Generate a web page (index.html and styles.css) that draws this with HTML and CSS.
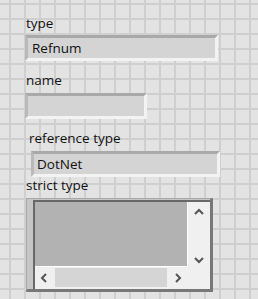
FILE: index.html
```html
<!DOCTYPE html>
<html lang="en">
<head>
    <meta charset="UTF-8">
    <meta name="viewport" content="width=device-width, initial-scale=1.0">
    <title>Refnum</title>
    <link rel="stylesheet" href="styles.css">
</head>
<body>
    <div class="panel">
        <div class="label lbl-type">type</div>
        <div class="field f-refnum">Refnum</div>

        <div class="label lbl-name">name</div>
        <div class="field f-name"></div>

        <div class="label lbl-ref">reference type</div>
        <div class="field f-dotnet">DotNet</div>

        <div class="label lbl-strict">strict type</div>
        <div class="listbox">
            <div class="inner">
                <div class="content"></div>
                <div class="vbar">
                    <svg width="10" height="7" viewBox="0 0 10 7"><path d="M1 6 L5 2 L9 6" fill="none" stroke="#555" stroke-width="2"/></svg>
                    <svg width="10" height="7" viewBox="0 0 10 7"><path d="M1 1 L5 5 L9 1" fill="none" stroke="#555" stroke-width="2"/></svg>
                </div>
                <div class="hbar">
                    <svg width="7" height="10" viewBox="0 0 7 10"><path d="M6 1 L2 5 L6 9" fill="none" stroke="#555" stroke-width="2"/></svg>
                    <div class="thumb"></div>
                    <svg width="7" height="10" viewBox="0 0 7 10"><path d="M1 1 L5 5 L1 9" fill="none" stroke="#555" stroke-width="2"/></svg>
                </div>
                <div class="corner"></div>
            </div>
        </div>
    </div>
</body>
</html>
```

FILE: styles.css
```css
*{
    margin: 0;
    padding: 0;
    box-sizing: border-box;
}
body{
    width: 258px;
    height: 299px;
    overflow: hidden;
    background-color: #e3e3e3;
    background-image:
        linear-gradient(to right, #cfcfcf 2px, transparent 2px),
        linear-gradient(to bottom, #cfcfcf 2px, transparent 2px);
    background-size: 15px 15px;
    background-position: 9px 3px;
    font: 13.5px "Open Sans", "Liberation Sans", sans-serif;
    color: #111;
}
.panel{
    display: flex;
    flex-direction: column;
    align-items: flex-start;
    padding-top: 15px;
}
.label{
    line-height: 16px;
    height: 16px;
}
.field{
    height: 26px;
    line-height: 16px;
    padding: 2px 4px;
    background: #d4d4d4;
    border-top: 3px solid #a9a9a9;
    border-left: 3px solid #b9b9b9;
    border-right: 3px solid #f3f3f3;
    border-bottom: 3px solid #f3f3f3;
}
.lbl-type{ margin-left: 26px; }
.f-refnum{ margin: 4px 0 0 25px; width: 193px; }
.lbl-name{ margin: 11px 0 0 26px; }
.f-name{ margin: 5px 0 0 25px; width: 122px; }
.lbl-ref{ margin: 11px 0 0 29px; }
.f-dotnet{ margin: 5px 0 0 31px; width: 189px; padding-left: 3px; }
.lbl-strict{ margin: 0 0 0 26px; }

.listbox{
    margin: 5px 0 0 26px;
    width: 187px;
    height: 94px;
    background: #c6c6c6;
    border-left: 1px solid #a8a8a8;
    border-top: 1px solid #a8a8a8;
    border-right: 3px solid #787878;
    border-bottom: 3px solid #787878;
    padding: 1px 0 0 6px;
}
.inner{
    height: 100%;
    border-top: 2px solid #686868;
    border-left: 2px solid #686868;
    display: grid;
    grid-template-columns: 1fr 22px;
    grid-template-rows: 1fr 22px;
    background: #f0f0f0;
}
.content{
    background: #b2b2b2;
    border-right: 1px solid #fff;
    border-bottom: 1px solid #fff;
}
.vbar{
    display: flex;
    flex-direction: column;
    justify-content: space-between;
    align-items: center;
    padding: 6px 0 3px;
}
.hbar{
    display: flex;
    align-items: center;
    padding: 0 6px 0 5px;
    gap: 8px;
}
.thumb{
    flex: 1;
    align-self: stretch;
    margin: 1px 0 2px;
    background: #d5d5d5;
}
.corner{
    background: #f0f0f0;
}
```
